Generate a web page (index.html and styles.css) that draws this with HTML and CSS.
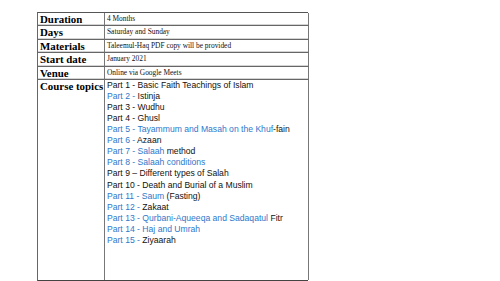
FILE: index.html
```html
<!DOCTYPE html>
<html>
<head>
<meta charset="utf-8">
<link rel="stylesheet" href="styles.css">
</head>
<body>
<div class="sheet">
  <div class="info">
    <div class="label">Duration</div><div class="value">4 Months</div>
    <div class="label">Days</div><div class="value">Saturday and Sunday</div>
    <div class="label">Materials</div><div class="value">Taleemul-Haq PDF copy will be provided</div>
    <div class="label">Start date</div><div class="value">January 2021</div>
    <div class="label">Venue</div><div class="value">Online via Google Meets</div>
    <div class="label tall">Course topics</div>
    <div class="value topics">
      <div>Part 1 - Basic Faith Teachings of Islam</div>
      <div><span class="link">Part 2 - </span>Istinja</div>
      <div>Part 3 - Wudhu</div>
      <div>Part 4 - Ghusl</div>
      <div><span class="link">Part 5 - Tayammum and Masah on the Khuf</span>-fain</div>
      <div><span class="link">Part 6 - </span>Azaan</div>
      <div><span class="link">Part 7 - Salaah</span> method</div>
      <div><span class="link">Part 8 - Salaah conditions</span></div>
      <div>Part 9 – Different types of Salah</div>
      <div>Part 10 - Death and Burial of a Muslim</div>
      <div><span class="link">Part 11 - Saum</span> (Fasting)</div>
      <div><span class="link">Part 12 - </span>Zakaat</div>
      <div><span class="link">Part 13 - Qurbani-Aqueeqa and Sadaqatul</span> Fitr</div>
      <div><span class="link">Part 14 - Haj and Umrah</span></div>
      <div><span class="link">Part 15 - </span>Ziyaarah</div>
    </div>
  </div>
</div>
</body>
</html>
```
FILE: styles.css
```css
html, body {
  margin: 0;
  padding: 0;
  background: #ffffff;
}
.sheet {
  padding: 12px 0 0 37px;
}
.info {
  display: grid;
  grid-template-columns: 67px 204px;
  grid-template-rows: 13.4px 13.4px 13.4px 13.4px 13.4px 200px;
  border-top: 1px solid #555;
  border-left: 1px solid #666;
  border-bottom: 2px solid #444;
  box-sizing: border-box;
  width: 271px;
}
.label, .value {
  border-right: 1px solid #777;
  border-bottom: 1px solid #666;
  box-shadow: inset 0 -1px 0 #d4d4d4;
  box-sizing: border-box;
  overflow: hidden;
  white-space: nowrap;
}
.label {
  font-family: "Liberation Serif", serif;
  font-weight: bold;
  font-size: 10.9px;
  line-height: 13px;
  padding: 0 0 0 2px;
  color: #000;
}
.value {
  font-family: "Liberation Serif", serif;
  font-size: 7.4px;
  line-height: 9px;
  padding: 1px 0 0 2px;
  color: #111;
}
.tall, .topics {
  border-bottom: none;
  box-shadow: none;
}
.topics {
  font-family: "Liberation Sans", sans-serif;
  font-size: 8.6px;
  line-height: 11.07px;
  padding-top: 0;
  color: #111;
}
.link {
  color: #2e78cc;
}
```
